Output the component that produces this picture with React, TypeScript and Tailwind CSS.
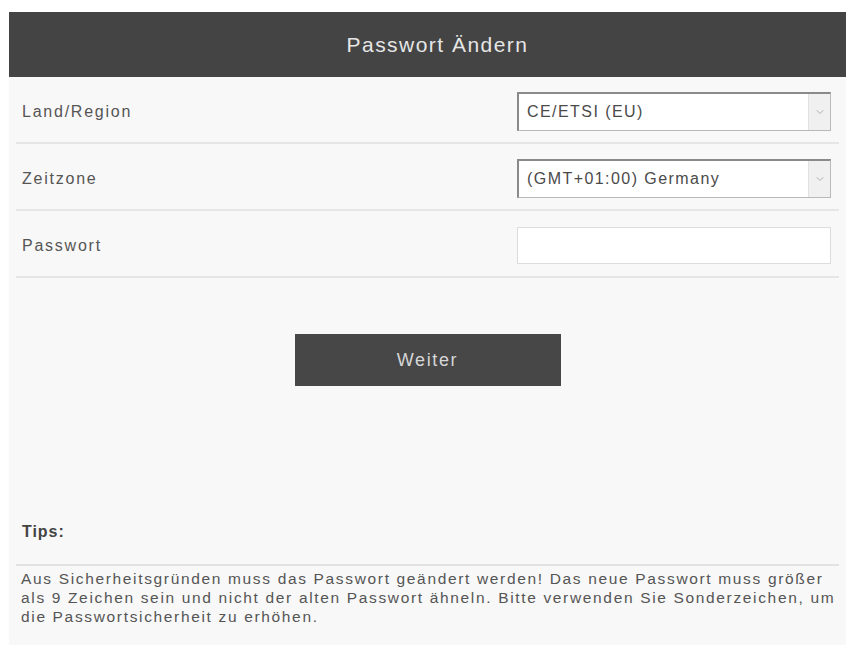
import { ChevronDown } from 'lucide-react';

function SelectBox({ value }: { value: string }) {
  return (
    <div className="flex h-[39px] w-[314px] items-stretch border border-[#b9b9b9] border-t-2 border-l-2 border-t-[#8a8a8a] border-l-[#8a8a8a] bg-white">
      <div className="flex flex-1 items-center pl-[8px] text-[16px] tracking-[0.09em] text-[#4a4a4a]">
        {value}
      </div>
      <div className="flex w-[22px] items-center justify-center border-l border-[#e2e2e2] bg-[#f0f0f0]">
        <ChevronDown className="h-3 w-3 text-[#9a9a9a]" strokeWidth={1.5} />
      </div>
    </div>
  );
}

function Row({ label, children }: { label: string; children: React.ReactNode }) {
  return (
    <div className="mx-[7px] flex h-[67px] items-center justify-between border-b-2 border-[#e6e6e6] pl-[6px] pr-[8px] pt-[4px]">
      <span className="text-[16px] tracking-[0.11em] text-[#555]">{label}</span>
      {children}
    </div>
  );
}

export default function App() {
  return (
    <div
      className="min-h-[645px] bg-white pt-[12px]"
      style={{ fontFamily: '"Liberation Sans", Arial, sans-serif' }}
    >
      <div className="ml-[9px] flex min-h-[633px] w-[837px] flex-col bg-[#f8f8f8]">
        {/* Header */}
        <div className="flex h-[65px] items-center justify-center bg-[#444444]">
          <h1 className="ml-[20px] text-[21px] tracking-[0.07em] text-[#e6e6e6]">Passwort Ändern</h1>
        </div>

        <Row label="Land/Region">
          <SelectBox value="CE/ETSI (EU)" />
        </Row>
        <Row label="Zeitzone">
          <SelectBox value="(GMT+01:00) Germany" />
        </Row>
        <Row label="Passwort">
          <input
            type="password"
            className="h-[37px] w-[314px] border border-[#dcdcdc] bg-white outline-none"
          />
        </Row>

        <div className="flex justify-center pt-[56px]">
          <button
            type="button"
            className="h-[52px] w-[266px] bg-[#474747] text-[18px] tracking-[0.09em] text-[#d6d6d6]"
          >
            Weiter
          </button>
        </div>

        <div className="mx-[7px] mt-[134px] border-b-2 border-[#e2e2e2] pb-[20px] pl-[6px]">
          <span className="text-[16px] font-bold tracking-[0.06em] text-[#444]">Tips:</span>
        </div>
        <p className="whitespace-nowrap px-[12px] pt-[3px] text-[15.5px] leading-[19px] tracking-[0.107em] text-[#555]">
          Aus Sicherheitsgründen muss das Passwort geändert werden! Das neue Passwort muss größer
          <br />
          als 9 Zeichen sein und nicht der alten Passwort ähneln. Bitte verwenden Sie Sonderzeichen, um
          <br />
          die Passwortsicherheit zu erhöhen.
        </p>
      </div>
    </div>
  );
}
